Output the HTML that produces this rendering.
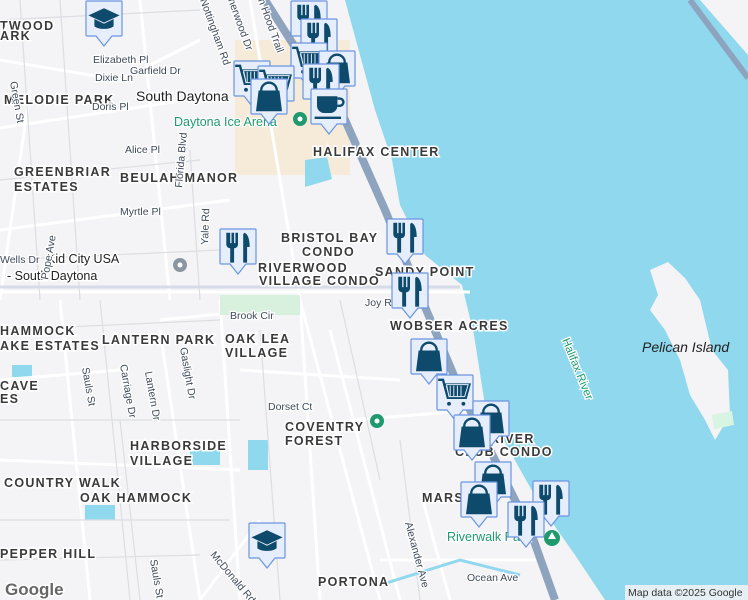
<!DOCTYPE html>
<html><head><meta charset="utf-8"><style>
html,body{margin:0;padding:0;width:748px;height:600px;overflow:hidden;background:#f4f3f5}
svg{display:block}
text{font-family:"Liberation Sans",sans-serif}
.n{font-size:12.5px;fill:#3a3a3a;letter-spacing:1.3px;font-weight:bold;stroke:#fff;stroke-width:3px;paint-order:stroke}
.s{font-size:10.5px;fill:#3e4a5a;stroke:#fff;stroke-width:2.5px;paint-order:stroke}
.c{font-size:14px;fill:#222;stroke:#fff;stroke-width:3px;paint-order:stroke}
.g{font-size:12.5px;fill:#1e9a6e;stroke:#fff;stroke-width:2.5px;paint-order:stroke}
</style></head><body>
<svg width="748" height="600" viewBox="0 0 748 600">
<defs>
<symbol id="m" viewBox="0 0 38 48"><path d="M2 1h34a1 1 0 0 1 1 1v33a1 1 0 0 1-1 1H27l-8 10-8-10H2a1 1 0 0 1-1-1V2a1 1 0 0 1 1-1z" fill="#e6eefc" stroke="#6b95df" stroke-width="1.2"/></symbol>
<symbol id="fork" viewBox="0 0 38 48"><use href="#m"/><g transform="translate(19,19) scale(1.3) translate(-19,-19)"><path d="M10 8v9a3 3 0 0 0 3 3v11h3V20a3 3 0 0 0 3-3V8h-2v8h-1V8h-2v8h-1V8z M24 8c3 1 4 6 4 11h-2v12h-3V9z" fill="#0d4a6c"/></g></symbol>
<symbol id="bag" viewBox="0 0 38 48"><use href="#m"/><g transform="translate(19,19) scale(1.3) translate(-19,-19)"><path d="M13 14a6 6 0 0 1 12 0" fill="none" stroke="#0d4a6c" stroke-width="1.8"/><path d="M11 14h16l2 16H9z" fill="#0d4a6c"/></g></symbol>
<symbol id="cart" viewBox="0 0 38 48"><use href="#m"/><g transform="translate(19,19) scale(1.2) translate(-19,-19)"><path d="M5 8h4l4 15h15l3-11H11" fill="none" stroke="#0d4a6c" stroke-width="2"/><path d="M12 12h18l-3 10H14z M15 13v9M18 13v9M21 13v9M24 13v9" fill="#0d4a6c" stroke="#e6eefc" stroke-width=".8"/><circle cx="14" cy="28" r="1.6" fill="#0d4a6c"/><circle cx="26" cy="28" r="1.6" fill="#0d4a6c"/></g></symbol>
<symbol id="cup" viewBox="0 0 38 48"><use href="#m"/><g transform="translate(19,19) scale(1.2) translate(-19,-19)"><path d="M9 10h17v8a6 6 0 0 1-6 6h-5a6 6 0 0 1-6-6z" fill="#0d4a6c"/><path d="M26 12h2a3 3 0 0 1 0 6h-2" fill="none" stroke="#0d4a6c" stroke-width="2"/><rect x="7" y="27" width="22" height="2" fill="#0d4a6c"/></g></symbol>
<symbol id="cap" viewBox="0 0 38 48"><use href="#m"/><g transform="translate(19,19) scale(1.2) translate(-19,-19)"><path d="M19 10l13 6-13 6-13-6z M11 19v6c3 3 13 3 16 0v-6l-8 4z" fill="#0d4a6c"/></g></symbol>
</defs>
<rect width="748" height="600" fill="#f4f3f5"/>
<rect x="235" y="40" width="115" height="135" fill="#f6ebd9"/>
<path d="M345 0H700L748 55V600H605L575 555L540 505L512 455L485 405L474 335L462 285L425 255L400 205L392 160L375 110L360 55Z" fill="#8fd8ee"/>
<path d="M705 0L748 50V0Z" fill="#f4f3f5"/>
<path d="M690 0L748 78" stroke="#8da3be" stroke-width="6"/>
<path d="M650 270L668 262 685 278 700 300 712 350 728 370 730 415 715 440 705 420 690 395 680 360 665 330 650 310 658 295Z" fill="#f4f3f5"/>
<path d="M712 415l20-4 2 14-20 4z" fill="#d8f5e4"/>
<path d="M190 450h30v15h-30z M248 440h20v30h-20z M85 505h30v15h-30z M12 365h20v12h-20z M305 160l22 -3 5 22-27 8z" fill="#8fd8ee"/>
<g stroke="#fff" stroke-width="3" fill="none">
<path d="M0 292H470"/><path d="M0 128L220 95"/><path d="M0 230L230 200"/><path d="M140 0L170 300"/><path d="M250 0L300 300L380 600"/>
<path d="M0 60L120 80L200 40"/><path d="M30 90L0 300"/><path d="M60 300L90 600"/><path d="M160 330L200 600"/><path d="M0 460L240 470"/>
<path d="M220 300L240 600"/><path d="M330 330L400 600"/><path d="M350 420L480 410"/><path d="M200 600L260 520"/><path d="M300 300L320 600"/>
<path d="M0 380L120 370"/><path d="M160 320L260 310"/><path d="M240 370L400 380"/><path d="M380 560L540 560"/><path d="M420 490L450 600"/>
</g>
<g stroke="#dcdee3" stroke-width="1.2" fill="none">
<path d="M0 20L200 10M0 180L200 160M0 260L220 250M0 330L220 320M0 420L240 420M0 520L230 520M0 560L200 555M20 0L40 300M60 0L80 300M100 300L130 600M190 150L200 300M260 330L280 600M340 300L380 480M400 440L420 600M120 420L140 600"/>
</g>
<path d="M0 287H460" stroke="#d5dce8" stroke-width="3"/>
<path d="M380 585L460 560 520 575" stroke="#8fd8ee" stroke-width="3" fill="none"/>
<path d="M265 0L300 55 345 120 385 210 420 295 460 390 500 470 530 530 555 600" stroke="#8da3be" stroke-width="8" fill="none"/>
<rect x="220" y="295" width="80" height="20" fill="#d8f0de"/>
<text class="n" x="0" y="30">TWOOD</text><text class="n" x="0" y="40">ARK</text>
<text class="n" x="4" y="104">MELODIE PARK</text>
<text class="n" x="14" y="176">GREENBRIAR</text><text class="n" x="14" y="191">ESTATES</text>
<text class="n" x="120" y="182">BEULAH MANOR</text>
<text class="n" x="313" y="156">HALIFAX CENTER</text>
<text class="n" x="281" y="242">BRISTOL BAY</text><text class="n" x="302" y="256">CONDO</text>
<text class="n" x="258" y="272">RIVERWOOD</text><text class="n" x="259" y="285">VILLAGE CONDO</text>
<text class="n" x="375" y="276">SANDY POINT</text>
<text class="n" x="390" y="330">WOBSER ACRES</text>
<text class="n" x="0" y="335">HAMMOCK</text><text class="n" x="0" y="350">AKE ESTATES</text>
<text class="n" x="102" y="344">LANTERN PARK</text>
<text class="n" x="225" y="343">OAK LEA</text><text class="n" x="225" y="357">VILLAGE</text>
<text class="n" x="0" y="390">CAVE</text><text class="n" x="0" y="403">ES</text>
<text class="n" x="285" y="431">COVENTRY</text><text class="n" x="285" y="445">FOREST</text>
<text class="n" x="130" y="450">HARBORSIDE</text><text class="n" x="130" y="465">VILLAGE</text>
<text class="n" x="4" y="487">COUNTRY WALK</text>
<text class="n" x="80" y="502">OAK HAMMOCK</text>
<text class="n" x="490" y="443">RIVER</text><text class="n" x="455" y="456">CLUB CONDO</text>
<text class="n" x="422" y="502">MARSH</text>
<text class="n" x="0" y="558">PEPPER HILL</text>
<text class="n" x="318" y="586">PORTONA</text>
<text class="c" x="136" y="101">South Daytona</text>
<text class="c" x="7" y="280" style="font-size:12.5px">- South Daytona</text>
<text class="c" x="47" y="263" style="font-size:12.5px">Kid City USA</text>
<text class="g" x="174" y="126">Daytona Ice Arena</text>
<text class="g" x="447" y="541">Riverwalk Park</text>
<text x="642" y="352" style="font-size:14px;font-style:italic;fill:#222">Pelican Island</text>
<text class="g" x="0" y="0" transform="translate(562,340) rotate(68)" style="font-size:11.5px">Halifax River</text>
<text class="s" x="365" y="306">Joy Rd</text><text class="s" x="230" y="319">Brook Cir</text>
<text class="s" x="268" y="410">Dorset Ct</text><text class="s" x="467" y="581">Ocean Ave</text>
<text class="s" x="95" y="81">Dixie Ln</text><text class="s" x="93" y="63">Elizabeth Pl</text><text class="s" x="92" y="110">Doris Pl</text>
<text class="s" x="125" y="153">Alice Pl</text><text class="s" x="120" y="215">Myrtle Pl</text><text class="s" x="130" y="74">Garfield Dr</text>
<text class="s" x="0" y="263">Wells Dr</text>
<g class="s"><text transform="translate(405,523) rotate(75)">Alexander Ave</text><text transform="translate(210,555) rotate(50)">McDonald Rd</text>
<text transform="translate(182,188) rotate(-85)">Florida Blvd</text><text transform="translate(208,245) rotate(-88)">Yale Rd</text>
<text transform="translate(48,280) rotate(-80)">Pope Ave</text><text transform="translate(82,368) rotate(80)">Sauls St</text><text transform="translate(150,560) rotate(80)">Sauls St</text>
<text transform="translate(120,365) rotate(80)">Carriage Dr</text><text transform="translate(145,372) rotate(80)">Lantern Dr</text><text transform="translate(180,348) rotate(80)">Gaslight Dr</text>
<text transform="translate(10,82) rotate(80)">Green St</text><text transform="translate(200,0) rotate(70)">Nottingham Rd</text><text transform="translate(228,0) rotate(70)">herwood Dr</text><text transform="translate(258,0) rotate(70)">n Hood Trail</text></g>
<circle cx="300" cy="119" r="7" fill="#1e9a6e"/><circle cx="300" cy="119" r="2.5" fill="#fff"/>
<circle cx="377" cy="421" r="7" fill="#1e9a6e"/><circle cx="377" cy="421" r="2.5" fill="#fff"/>
<circle cx="552" cy="538" r="8" fill="#1e9a6e"/><path d="M552 532l-4 7h8z" fill="#fff"/>
<circle cx="180" cy="265" r="7" fill="#8c96a3"/><circle cx="180" cy="265" r="2.5" fill="#fff"/>
<use href="#cap" x="85" y="0" width="38" height="48"/>
<use href="#fork" x="290" y="0" width="38" height="48"/>
<use href="#fork" x="300" y="18" width="38" height="48"/>
<use href="#cart" x="290" y="42" width="38" height="48"/>
<use href="#bag" x="318" y="50" width="38" height="48"/>
<use href="#cart" x="233" y="60" width="38" height="48"/>
<use href="#cart" x="257" y="65" width="38" height="48"/>
<use href="#bag" x="250" y="78" width="38" height="48"/>
<use href="#fork" x="302" y="63" width="38" height="48"/>
<use href="#cup" x="310" y="88" width="38" height="48"/>
<use href="#fork" x="219" y="228" width="38" height="48"/>
<use href="#fork" x="386" y="218" width="38" height="48"/>
<use href="#fork" x="391" y="272" width="38" height="48"/>
<use href="#bag" x="410" y="338" width="38" height="48"/>
<use href="#cart" x="436" y="374" width="38" height="48"/>
<use href="#bag" x="472" y="400" width="38" height="48"/>
<use href="#bag" x="453" y="414" width="38" height="48"/>
<use href="#bag" x="474" y="461" width="38" height="48"/>
<use href="#fork" x="532" y="480" width="38" height="48"/>
<use href="#bag" x="460" y="481" width="38" height="48"/>
<use href="#fork" x="507" y="501" width="38" height="48"/>
<use href="#cap" x="248" y="522" width="38" height="48"/>
<rect x="625" y="585" width="123" height="15" fill="#f4f3f5" opacity=".85"/>
<text x="628" y="596" style="font-size:10.5px;fill:#333">Map data ©2025 Google</text>
<text x="5" y="595" style="font-size:17px;font-weight:bold;fill:#666;stroke:#fff;stroke-width:3px;paint-order:stroke">Google</text>
</svg>
</body></html>
